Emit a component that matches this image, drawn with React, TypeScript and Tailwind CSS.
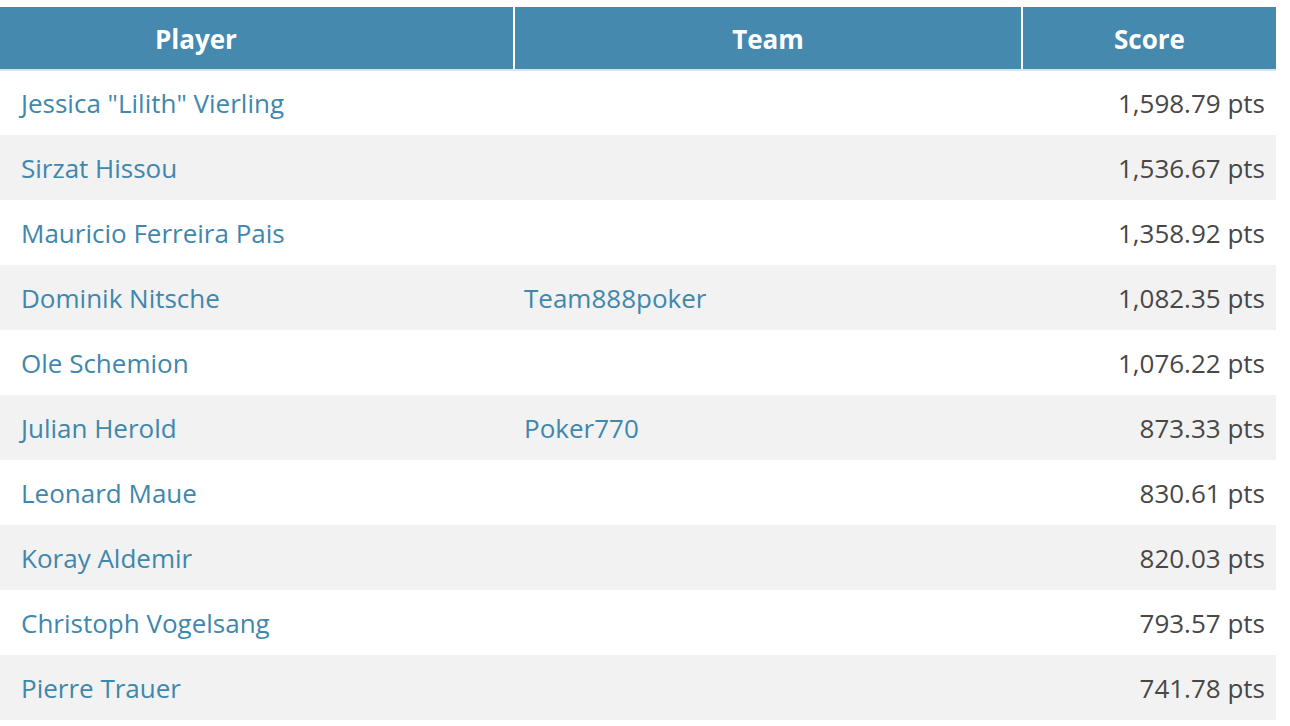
import React from "react";

const rows: { name: string; team: string; score: string }[] = [
  { name: 'Jessica "Lilith" Vierling', team: "", score: "1,598.79 pts" },
  { name: "Sirzat Hissou", team: "", score: "1,536.67 pts" },
  { name: "Mauricio Ferreira Pais", team: "", score: "1,358.92 pts" },
  { name: "Dominik Nitsche", team: "Team888poker", score: "1,082.35 pts" },
  { name: "Ole Schemion", team: "", score: "1,076.22 pts" },
  { name: "Julian Herold", team: "Poker770", score: "873.33 pts" },
  { name: "Leonard Maue", team: "", score: "830.61 pts" },
  { name: "Koray Aldemir", team: "", score: "820.03 pts" },
  { name: "Christoph Vogelsang", team: "", score: "793.57 pts" },
  { name: "Pierre Trauer", team: "", score: "741.78 pts" },
];

export default function App() {
  return (
    <div className="w-[1290px] h-[726px] bg-white pt-[7px] overflow-hidden" style={{ fontFamily: '"Open Sans", "Liberation Sans", sans-serif' }}>
      <table className="w-[1276px] table-fixed border-collapse">
        <colgroup>
          <col className="w-[514px]" />
          <col className="w-[508px]" />
          <col className="w-[254px]" />
        </colgroup>
        <thead>
          <tr className="bg-[#4589ae] text-white text-[26px] font-bold">
            <th className="h-[63px] text-left pl-[155px] border-b-2 border-b-[#d5e6ef] p-0 pt-[2px]">Player</th>
            <th className="h-[63px] text-center border-l-2 border-l-white border-b-2 border-b-[#d5e6ef] p-0 pt-[2px]">Team</th>
            <th className="h-[63px] text-center border-l-2 border-l-white border-b-2 border-b-[#d5e6ef] p-0 pt-[2px]">Score</th>
          </tr>
        </thead>
        <tbody className="text-[26px]">
          {rows.map((r, i) => (
            <tr key={i} className={i % 2 === 1 ? "bg-[#f2f2f2]" : "bg-white"}>
              <td className="h-[65px] pl-[21px] pt-[1px] text-[#3f87ad] whitespace-nowrap">{r.name}</td>
              <td className="h-[65px] pl-[10px] pt-[1px] text-[#3f87ad] whitespace-nowrap">{r.team}</td>
              <td className="h-[65px] pr-[11px] pt-[1px] text-right text-[#474747] whitespace-nowrap">{r.score}</td>
            </tr>
          ))}
        </tbody>
      </table>
    </div>
  );
}
